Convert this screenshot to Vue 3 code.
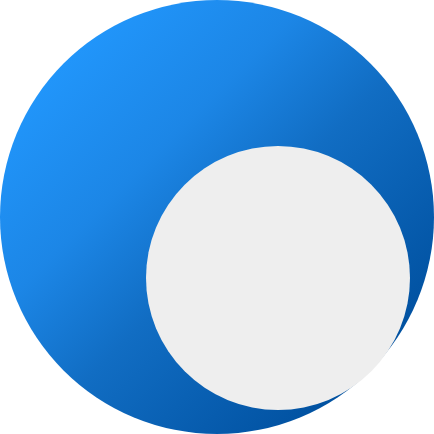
<script setup>
</script>

<template>
  <div class="page">
    <svg class="logo" viewBox="0 0 434 434" width="434" height="434" role="img" aria-label="Logo">
      <defs>
        <linearGradient id="blue" gradientUnits="userSpaceOnUse" x1="60" y1="60" x2="374" y2="374">
          <stop offset="0" stop-color="#2196fb" />
          <stop offset="0.3" stop-color="#1c86e6" />
          <stop offset="0.55" stop-color="#116dc3" />
          <stop offset="1" stop-color="#00509f" />
        </linearGradient>
      </defs>
      <circle cx="217" cy="217" r="217" fill="url(#blue)" />
      <circle cx="278" cy="278" r="132" fill="#eeeeee" />
    </svg>
  </div>
</template>

<style scoped>
.page {
  width: 434px;
  height: 434px;
  background: #ffffff;
}
.logo {
  display: block;
}
</style>

<style>
html, body {
  margin: 0;
  background: #ffffff;
}
</style>
